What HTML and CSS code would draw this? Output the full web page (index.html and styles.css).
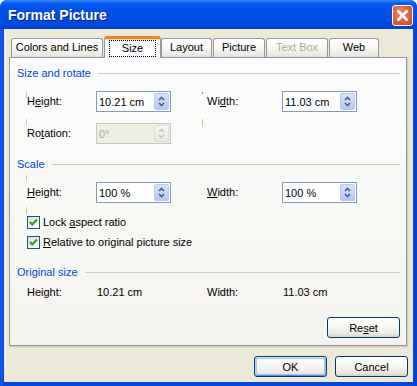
FILE: index.html
```html
<!DOCTYPE html>
<html>
<head>
<meta charset="utf-8">
<title>Format Picture</title>
<link rel="stylesheet" href="styles.css">
</head>
<body>
<div class="window">
  <div class="titlebar">
    <span class="title">Format Picture</span>
    <div class="close">
      <svg width="13" height="13" viewBox="0 0 13 13"><path d="M2.5 2.5 L10.5 10.5 M10.5 2.5 L2.5 10.5" stroke="#fff" stroke-width="2.8" stroke-linecap="square"/></svg>
    </div>
  </div>
  <div class="client">
    <div class="tabs">
      <div class="tab w-colors">Colors and Lines</div>
      <div class="tab active w-size"><span class="focus">Size</span></div>
      <div class="tab w-layout">Layout</div>
      <div class="tab w-picture">Picture</div>
      <div class="tab disabled w-textbox">Text Box</div>
      <div class="tab w-web">Web</div>
    </div>
    <div class="panel">
      <span class="mark m1"></span><span class="mark m2"></span><span class="mark m3"></span>
      <span class="mark m4"></span><span class="mark m5"></span><span class="mark m6"></span>

      <div class="hdr"><span>Size and rotate</span><i></i></div>
      <div class="row r1">
        <span class="lbl">H<u>e</u>ight:</span>
        <div class="spin"><span class="val">10.21 cm</span><span class="sb"><svg width="13" height="15" viewBox="0 0 13 15"><path d="M4 6 L6.5 3.5 L9 6" fill="none" stroke="#4D6185" stroke-width="1.6"/><path d="M4 9 L6.5 11.5 L9 9" fill="none" stroke="#4D6185" stroke-width="1.6"/></svg></span></div>
        <span class="lbl lbl2">Wi<u>d</u>th:</span>
        <div class="spin"><span class="val">11.03 cm</span><span class="sb"><svg width="13" height="15" viewBox="0 0 13 15"><path d="M4 6 L6.5 3.5 L9 6" fill="none" stroke="#4D6185" stroke-width="1.6"/><path d="M4 9 L6.5 11.5 L9 9" fill="none" stroke="#4D6185" stroke-width="1.6"/></svg></span></div>
      </div>
      <div class="row r2">
        <span class="lbl">Ro<u>t</u>ation:</span>
        <div class="spin off"><span class="val">0°</span><span class="sb"><svg width="13" height="15" viewBox="0 0 13 15"><path d="M4 6 L6.5 3.5 L9 6" fill="none" stroke="#C9C7BA" stroke-width="1.6"/><path d="M4 9 L6.5 11.5 L9 9" fill="none" stroke="#C9C7BA" stroke-width="1.6"/></svg></span></div>
      </div>

      <div class="hdr h2"><span>Scale</span><i></i></div>
      <div class="row r3">
        <span class="lbl"><u>H</u>eight:</span>
        <div class="spin"><span class="val">100 %</span><span class="sb"><svg width="13" height="15" viewBox="0 0 13 15"><path d="M4 6 L6.5 3.5 L9 6" fill="none" stroke="#4D6185" stroke-width="1.6"/><path d="M4 9 L6.5 11.5 L9 9" fill="none" stroke="#4D6185" stroke-width="1.6"/></svg></span></div>
        <span class="lbl lbl2"><u>W</u>idth:</span>
        <div class="spin"><span class="val">100 %</span><span class="sb"><svg width="13" height="15" viewBox="0 0 13 15"><path d="M4 6 L6.5 3.5 L9 6" fill="none" stroke="#4D6185" stroke-width="1.6"/><path d="M4 9 L6.5 11.5 L9 9" fill="none" stroke="#4D6185" stroke-width="1.6"/></svg></span></div>
      </div>
      <div class="chk c1"><span class="box"><svg width="11" height="11" viewBox="0 0 11 11"><path d="M2 5 L4.3 7.5 L9 2.6" fill="none" stroke="#21A121" stroke-width="2.2"/></svg></span><span>Lock <u>a</u>spect ratio</span></div>
      <div class="chk c2"><span class="box"><svg width="11" height="11" viewBox="0 0 11 11"><path d="M2 5 L4.3 7.5 L9 2.6" fill="none" stroke="#21A121" stroke-width="2.2"/></svg></span><span><u>R</u>elative to original picture size</span></div>

      <div class="hdr h3"><span>Original size</span><i></i></div>
      <div class="orig">
        <span class="lbl">Height:</span>
        <span class="oval">10.21 cm</span>
        <span class="lbl lbl2">Width:</span>
        <span class="oval">11.03 cm</span>
      </div>
      <div class="resetrow"><div class="btn">Re<u>s</u>et</div></div>
    </div>
    <div class="footer">
      <div class="btn default">OK</div>
      <div class="btn">Cancel</div>
    </div>
  </div>
</div>
</body>
</html>
```

FILE: styles.css
```css
* { box-sizing: border-box; }
html, body { margin: 0; padding: 0; background: #fff; }
body {
  font-family: "Liberation Sans", Arial, sans-serif;
  font-size: 11px;
  line-height: 13px;
  color: #000;
}
u { text-decoration: underline; text-underline-offset: 1px; }

.window {
  width: 417px;
  height: 386px;
  display: flex;
  flex-direction: column;
  background: linear-gradient(to right, #0831D9 0px, #166AEE 1px, #0548D8 3px, #0548D8 413px, #0A3FC6 416px);
  border-radius: 7px 7px 0 0;
  overflow: hidden;
}

.titlebar {
  height: 29px;
  flex: none;
  display: flex;
  align-items: center;
  justify-content: space-between;
  padding: 0 4px 0 8px;
  background: linear-gradient(to bottom, #3A8CFF 0px, #0A5EF2 3px, #0052EA 8px, #004EE4 16px, #0049DC 24px, #0042CE 29px);
}
.title {
  color: #fff;
  font-weight: bold;
  font-size: 14px;
  text-shadow: 1px 1px 0 #0A1E85;
  padding-top: 1px;
}
.close {
  width: 21px;
  height: 21px;
  border: 1px solid #fff;
  border-radius: 3px;
  background: radial-gradient(circle at 40% 35%, #F08A66 0%, #E06540 45%, #C8411B 100%);
  display: flex;
  align-items: center;
  justify-content: center;
  margin-top: 1px;
}

.client {
  flex: 1;
  margin: 0 4px 4px 4px;
  background: #ECE9D8;
  padding: 7px 6px 0 5px;
  display: flex;
  flex-direction: column;
}

.tabs {
  height: 21px;
  display: flex;
  align-items: flex-end;
  padding-left: 2px;
  position: relative;
  z-index: 2;
}
.tab {
  height: 19px;
  border: 1px solid #919B9C;
  border-bottom: none;
  border-radius: 3px 3px 0 0;
  background: linear-gradient(to bottom, #FFFFFF 0%, #FAFAF8 40%, #EEEDE7 80%, #E4E2DA 100%);
  display: flex;
  align-items: center;
  justify-content: center;
  margin-right: 1px;
  padding-bottom: 1px;
}
.tab.disabled { color: #ACA899; }
.tab.active {
  height: 22px;
  margin-bottom: -1px;
  margin-right: 0;
  border-top: 3px solid #E68B2C;
  box-shadow: inset 0 1px 0 #FFD98A;
  background: #FCFCFE;
  align-items: flex-start;
  padding: 1px 0 0 0;
}
.focus {
  width: 47px;
  height: 17px;
  border: 1px dotted #000;
  display: flex;
  align-items: center;
  justify-content: center;
}
.w-colors { width: 92px; }
.w-size { width: 57px; }
.w-layout { width: 51px; }
.w-picture { width: 52px; }
.w-textbox { width: 62px; }
.w-web { width: 50px; }

.panel {
  position: relative;
  height: 289px;
  border: 1px solid #919B9C;
  box-shadow: 1px 1px 0 #D0CEBF, 2px 2px 0 #E3E1D4;
  background: linear-gradient(to bottom, #FCFCFE 0%, #F8F8F5 50%, #F4F3EE 100%);
  padding: 9px 6px 7px 7px;
  display: flex;
  flex-direction: column;
}

.mark {
  position: absolute;
  width: 1px;
  background: #F2BE6E;
}
.m1 { left: 16px; top: 34px; height: 6px; }
.m2 { left: 16px; top: 61px; height: 6px; }
.m3 { left: 192px; top: 34px; height: 2px; background: #C07A20; }
.m4 { left: 192px; top: 61px; height: 8px; }
.m5 { left: 16px; top: 117px; height: 6px; }
.m6 { left: 16px; top: 149px; height: 7px; }

.hdr {
  height: 13px;
  display: flex;
  align-items: center;
  color: #0046D5;
}
.hdr i {
  flex: 1;
  height: 1px;
  background: #D0D0BF;
  margin-left: 7px;
}
.h2 { margin-top: 14px; }
.h3 { margin-top: 17px; }

.row {
  height: 21px;
  display: flex;
  align-items: center;
  padding-left: 10px;
  margin-top: 11px;
}
.lbl { width: 69px; flex: none; }
.lbl2 { margin-left: 36px; width: 75px; }

.spin {
  width: 75px;
  height: 21px;
  flex: none;
  border: 1px solid #7F9DB9;
  background: #fff;
  display: flex;
  align-items: center;
  justify-content: space-between;
  padding: 0 1px 0 2px;
}
.spin .val { padding-top: 1px; }
.sb {
  width: 15px;
  height: 17px;
  border: 1px solid #B9C9F3;
  border-radius: 2px;
  background: linear-gradient(to bottom, #D6E1FC 0%, #C6D5FA 50%, #B4C6F5 100%);
  display: flex;
  align-items: center;
  justify-content: center;
}
.spin.off {
  border-color: #C9C7BA;
  background: #F0EFE6;
  color: #ACA899;
}
.spin.off .sb {
  border-color: #E0DED3;
  background: linear-gradient(to bottom, #F5F4EE, #ECEBE3);
}

.chk {
  height: 13px;
  display: flex;
  align-items: center;
  padding-left: 10px;
}
.c1 { margin-top: 13px; }
.c2 { margin-top: 7px; }
.box {
  width: 13px;
  height: 13px;
  border: 1px solid #1C5180;
  background: linear-gradient(135deg, #DCDCD7 0%, #F6F6F4 60%, #FFFFFF 100%);
  display: flex;
  align-items: center;
  justify-content: center;
  margin-right: 3px;
  flex: none;
}

.orig {
  height: 13px;
  display: flex;
  align-items: center;
  padding-left: 10px;
  margin-top: 7px;
}
.oval { width: 75px; flex: none; padding-left: 1px; }

.resetrow {
  margin-top: 18px;
  display: flex;
  justify-content: flex-end;
}

.btn {
  width: 73px;
  height: 21px;
  border: 1px solid #003C74;
  border-radius: 3px;
  background: linear-gradient(to bottom, #FFFFFF 0%, #F7F7F4 40%, #ECEBE6 80%, #D6D0C5 100%);
  display: flex;
  align-items: center;
  justify-content: center;
  padding-top: 1px;
}
.btn.default {
  box-shadow: inset 0 1px 0 #CEE7FF, inset 1px 0 0 #B8D3F7, inset -1px 0 0 #8FB1EE, inset 0 -1px 0 #6982EE, inset 0 0 0 2px #A9C5F3;
}

.footer {
  margin-top: 10px;
  margin-right: -1px;
  display: flex;
  justify-content: flex-end;
  gap: 8px;
}
```
